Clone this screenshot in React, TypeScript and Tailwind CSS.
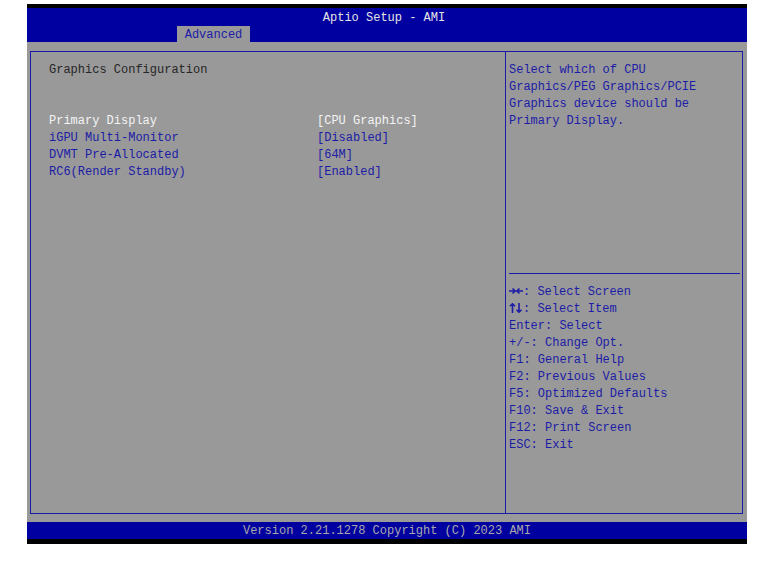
const settings = [
  { label: 'Primary Display', value: '[CPU Graphics]', active: true },
  { label: 'iGPU Multi-Monitor', value: '[Disabled]' },
  { label: 'DVMT Pre-Allocated', value: '[64M]' },
  { label: 'RC6(Render Standby)', value: '[Enabled]' },
];

const helpLines = [
  'Select which of CPU',
  'Graphics/PEG Graphics/PCIE',
  'Graphics device should be',
  'Primary Display.',
];

const keys = [
  { k: 'lr', rest: ': Select Screen' },
  { k: 'ud', rest: ': Select Item' },
  { k: 'Enter', rest: ': Select' },
  { k: '+/-', rest: ': Change Opt.' },
  { k: 'F1', rest: ': General Help' },
  { k: 'F2', rest: ': Previous Values' },
  { k: 'F5', rest: ': Optimized Defaults' },
  { k: 'F10', rest: ': Save & Exit' },
  { k: 'F12', rest: ': Print Screen' },
  { k: 'ESC', rest: ': Exit' },
];

function ArrowsLR() {
  return (
    <svg width="14" height="10" viewBox="0 0 14 10" className="inline-block align-[-1px]" fill="none" stroke="currentColor" strokeWidth="1.6">
      <path d="M0 5h6M3.5 2.5L6.2 5L3.5 7.5" />
      <path d="M14 5H8M10.5 2.5L7.8 5L10.5 7.5" />
    </svg>
  );
}

function ArrowsUD() {
  return (
    <svg width="14" height="10" viewBox="0 0 14 10" className="inline-block align-[-1px]" fill="none" stroke="currentColor" strokeWidth="1.6">
      <path d="M3.5 10V0.8M1 3.3L3.5 0.8L6 3.3" />
      <path d="M10 0V9.2M7.5 6.7L10 9.2L12.5 6.7" />
    </svg>
  );
}

export default function App() {
  return (
    <div className="min-h-screen bg-white pt-[4px] pl-[27px] font-['Liberation_Mono',monospace] text-[12px] leading-[17px]">
      <div className="w-[720px] h-[540px] bg-black flex flex-col">
        {/* Header */}
        <div className="mt-[4px] h-[34px] bg-[#0000a0] flex flex-col">
          <div className="h-[18px] pt-[2px] text-center pr-[6px] text-[#e4e4e4]">Aptio Setup - AMI</div>
          <div className="mt-auto ml-[150px] w-[73px] h-[16px] bg-[#999999] text-[#1c1ca6] text-center leading-[16px] pt-[1px]">
            Advanced
          </div>
        </div>

        {/* Body */}
        <div className="h-[480px] bg-[#999999] pt-[9px] pl-[3px] pr-[4px] pb-[8px] flex">
          <div className="flex-1 flex border border-[#1a1aa8]">
            {/* Left column */}
            <div className="w-[475px] border-r border-[#1a1aa8] pt-[10px] pl-[18px]">
              <div className="text-[#262626]">Graphics Configuration</div>
              <div className="mt-[34px]">
                {settings.map((s) => (
                  <div key={s.label} className="flex">
                    <div className={`w-[268px] ${s.active ? 'text-[#f4f4f4]' : 'text-[#1c1ca6]'}`}>{s.label}</div>
                    <div className={s.active ? 'text-[#f4f4f4]' : 'text-[#1c1ca6]'}>{s.value}</div>
                  </div>
                ))}
              </div>
            </div>

            {/* Right column */}
            <div className="flex-1 flex flex-col pl-[3px] pr-[2px] text-[#1c1ca6]">
              <div className="h-[221px] pt-[10px]">
                {helpLines.map((l) => (
                  <div key={l}>{l}</div>
                ))}
              </div>
              <div className="h-px bg-[#1a1aa8]" />
              <div className="pt-[10px]">
                {keys.map((r) => (
                  <div key={r.k} className="h-[17px] whitespace-pre">
                    {r.k === 'lr' ? <ArrowsLR /> : r.k === 'ud' ? <ArrowsUD /> : r.k}
                    {r.rest}
                  </div>
                ))}
              </div>
            </div>
          </div>
        </div>

        {/* Footer */}
        <div className="h-[17px] bg-[#0000a0] text-center text-[#a8a8a8] leading-[17px] pt-[1px]">
          Version 2.21.1278 Copyright (C) 2023 AMI
        </div>
      </div>
    </div>
  );
}
